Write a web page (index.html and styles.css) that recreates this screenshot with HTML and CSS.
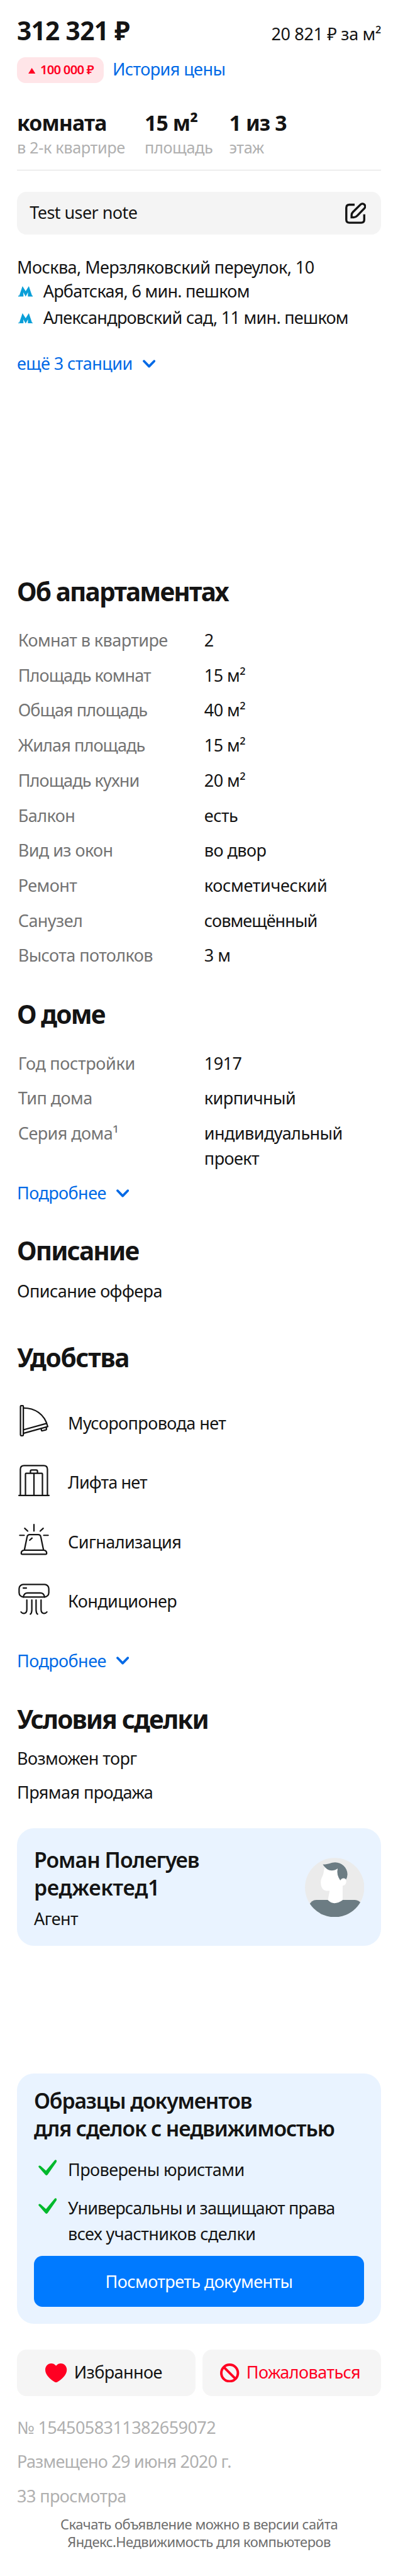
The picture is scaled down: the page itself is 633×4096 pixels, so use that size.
FILE: index.html
```html
<!DOCTYPE html>
<html lang="ru">
<head>
<meta charset="utf-8">
<title>Комната</title>
<link rel="stylesheet" href="styles.css">
</head>
<body>
<main class="offer">
  <header class="price-row">
    <div class="price">312 321 ₽</div>
    <div class="price-per">20 821 ₽ за м²</div>
  </header>
  <div class="history">
    <span class="badge"><svg class="badge-arrow" viewBox="0 0 20 16"><path d="M10 0 20 16H0z"/></svg><span class="badge-text">100 000 ₽</span></span>
    <a class="link history-link">История цены</a>
  </div>
  <div class="stats">
    <div><div class="stat-title">комната</div><div class="stat-sub">в 2-к квартире</div></div>
    <div><div class="stat-title">15 м²</div><div class="stat-sub">площадь</div></div>
    <div><div class="stat-title">1 из 3</div><div class="stat-sub">этаж</div></div>
  </div>
  <div class="note">
    <span class="note-text">Test user note</span>
    <svg class="note-icon" viewBox="45 38 180 181"><path d="M125 57H80Q54 57 54 83V184Q54 210 80 210H181Q207 210 207 184V138"/><path d="M99 165V146Q99 131 110 120L176 55A23 23 0 0 1 209 87L148 150Q134 165 118 165Z"/></svg>
  </div>
  <div class="address">Москва, Мерзляковский переулок, 10</div>
  <ul class="metro">
    <li><svg class="metro-icon" viewBox="0 0 14 9.800"><path d="M0 8.900H1L4 0 7 4.800 10 0 13 8.900H14V9.800H9.100V8.900L9.200 5.800 7 9.800 4.800 5.800 4.900 8.900V9.800H0Z"/></svg><span>Арбатская, 6 мин. пешком</span></li>
    <li><svg class="metro-icon" viewBox="0 0 14 9.800"><path d="M0 8.900H1L4 0 7 4.800 10 0 13 8.900H14V9.800H9.100V8.900L9.200 5.800 7 9.800 4.800 5.800 4.900 8.900V9.800H0Z"/></svg><span>Александровский сад, 11 мин. пешком</span></li>
  </ul>
  <a class="link more more-metro"><span>ещё 3 станции</span><svg class="chevron" viewBox="0 0 12 8"><path d="M1.200 1.300 6 6.300 10.800 1.300"/></svg></a>

  <h2 class="about-title">Об апартаментах</h2>
  <dl class="params">
    <dt>Комнат в квартире</dt><dd>2</dd>
    <dt class="tight">Площадь комнат</dt><dd>15 м²</dd>
    <dt class="tight">Общая площадь</dt><dd>40 м²</dd>
    <dt class="tight">Жилая площадь</dt><dd>15 м²</dd>
    <dt class="tight">Площадь кухни</dt><dd>20 м²</dd>
    <dt>Балкон</dt><dd>есть</dd>
    <dt>Вид из окон</dt><dd>во двор</dd>
    <dt>Ремонт</dt><dd class="loose">косметический</dd>
    <dt>Санузел</dt><dd class="tight">совмещённый</dd>
    <dt>Высота потолков</dt><dd>3 м</dd>
  </dl>

  <h2 class="house-title">О доме</h2>
  <dl class="params">
    <dt class="loose">Год постройки</dt><dd>1917</dd>
    <dt>Тип дома</dt><dd>кирпичный</dd>
    <dt>Серия дома¹</dt><dd>индивидуальный проект</dd>
  </dl>
  <a class="link more more-house"><span>Подробнее</span><svg class="chevron" viewBox="0 0 12 8"><path d="M1.200 1.300 6 6.300 10.800 1.300"/></svg></a>

  <h2 class="desc-title">Описание</h2>
  <p class="desc">Описание оффера</p>

  <h2 class="features-title">Удобства</h2>
  <ul class="features">
    <li><svg class="feature-icon" viewBox="0 0 32 32"><rect x="3.300" y="1.900" width="2.700" height="28.200" rx=".7"/><path d="M6 4C16.500 4 26 9.500 29 21.600L6 27.900M6 24.600 27.800 18.600M22.800 23.600 23.100 25Q23.300 25.700 24 25.500L27.200 24.700Q27.900 24.500 27.800 23.800L27.600 22.300"/></svg><span>Мусоропровода нет</span></li>
    <li><svg class="feature-icon" viewBox="0 0 32 32"><path d="M3.200 30V5.500Q3.200 2 6.700 2H25.200Q28.700 2 28.700 5.500V30M1.800 30.100H30.200M8 30V10Q8 9.300 8.700 9.300H23.300Q24 9.300 24 10V30M16 9.300V30M12.700 9.300V7.300Q12.700 6.100 13.900 6.100H18.100Q19.300 6.100 19.300 7.300V9.300"/></svg><span class="tight">Лифта нет</span></li>
    <li><svg class="feature-icon" viewBox="0 0 32 32"><path d="M16 1.900V8M7.300 5.400 10.100 8M24.700 5.400 21.900 8M2.600 12H6.800M25.200 12H29.400M7 25.800 9.500 13.600Q9.900 11.400 12 11.400H20Q22.100 11.400 22.500 13.600L25 25.800M12 16.600 14.200 14.600M6.500 26H25.500Q28 26.300 28 29.100 28 29.900 27.200 29.900H4.800Q4 29.900 4 29.100 4 26.300 6.500 26Z"/></svg><span>Сигнализация</span></li>
    <li><svg class="feature-icon" viewBox="0 0 32 32"><rect x="2" y="2" width="28" height="11.800" rx="4"/><path d="M5.900 5.400H8.900M6 13.800Q6.700 10 10 10H22Q25.300 10 26 13.800M9.300 16.700V25.500C9.300 30 5.500 30 3.800 27.900M14 16.700V26Q14 28.800 12.600 30M18 16.700V26Q18 28.800 19.400 30M22.700 16.700V25.500C22.700 30 26.500 30 28.200 27.900"/></svg><span>Кондиционер</span></li>
  </ul>
  <a class="link more more-features"><span>Подробнее</span><svg class="chevron" viewBox="0 0 12 8"><path d="M1.200 1.300 6 6.300 10.800 1.300"/></svg></a>

  <h2 class="deal-title">Условия сделки</h2>
  <ul class="deal"><li>Возможен торг</li><li>Прямая продажа</li></ul>

  <section class="card agent">
    <div>
      <div class="card-title">Роман Полегуев<br><span class="agent-nick">реджектед1</span></div>
      <div class="agent-role">Агент</div>
    </div>
    <svg class="avatar" viewBox="64 66 503 501">
      <clipPath id="round"><circle cx="315.500" cy="316.500" r="251"/></clipPath>
      <g clip-path="url(#round)">
        <path fill="#ebebeb" d="M64 66H567V567H64Z"/>
        <path fill="#6c7c83" d="M95 567V470Q120 421 160 421H487Q520 421 550 460V567Z"/>
        <path fill="#fff" d="M232 145Q224 165 221 196 218 214 207 231 198 248 198 272 199 345 257 345H273L258 423Q284 449 313 449 348 449 383 423V302Q414 294 414 264 413 245 400 239L345 150Z"/>
        <path fill="#6c7c83" d="M215 121C265 122 285 103 320 103 375 104 423 145 424 205Q423 230 412 249 406 238 391 238 375 238 363 256 329 208 341 155C300 184 252 180 215 121Z"/>
      </g>
    </svg>
  </section>

  <section class="card docs">
    <div class="card-title docs-title">Образцы документов<br>для сделок с недвижимостью</div>
    <ul class="checks">
      <li><svg class="check" viewBox="0 0 24 20"><path d="M.3 9.300Q0 7.900 1.100 7.500T3.400 8.200L9.800 14 20.800.8Q21.900-.4 23.100.3T23.500 2.600L12 19Q10.400 21 8.800 19Z"/></svg><span>Проверены юристами</span></li>
      <li><svg class="check" viewBox="0 0 24 20"><path d="M.3 9.300Q0 7.900 1.100 7.500T3.400 8.200L9.800 14 20.800.8Q21.900-.4 23.100.3T23.500 2.600L12 19Q10.400 21 8.800 19Z"/></svg><span><span class="tight">Универсальны и защищают права</span><br>всех участников сделки</span></li>
    </ul>
    <a class="docs-button">Посмотреть документы</a>
  </section>

  <div class="actions">
    <a class="action action-favorite"><svg class="heart" viewBox="0 0 61 54"><path d="M30.500 6.500C35 1.500 39 0 44 0 54 0 61 8 61 18 61 32 47 45 33.500 53Q30.500 55 27.500 53C14 45 0 32 0 18 0 8 7 0 17 0 22 0 26 1.500 30.500 6.500Z"/></svg><span>Избранное</span></a>
    <a class="action action-report"><svg class="ban" viewBox="0 0 54 54"><circle cx="27" cy="27" r="23.500"/><path d="M11 11 43 43"/></svg><span>Пожаловаться</span></a>
  </div>
  <ul class="meta"><li>№ 1545058311382659072</li><li class="meta-date">Размещено 29 июня 2020 г.</li><li>33 просмотра</li></ul>
  <p class="footer">Скачать объявление можно в версии сайта<br>Яндекс.Недвижимость для компьютеров</p>
</main>
</body>
</html>
```
FILE: styles.css
```css
/* 1rem equals ten layout units on a 375-unit wide screen */
html { font-size: 16.875px; }
body {
  margin: 0;
  background: #fff;
  color: #141414;
  font-family: "Noto Sans", "Open Sans", sans-serif;
  font-size: 1.6rem;
  line-height: 2.2rem;
  letter-spacing: -0.021em;
}
h2, p, ul, dl, dd { margin: 0; padding: 0; }
ul { list-style: none; }
svg { display: block; flex: none; }
.offer {
  box-sizing: border-box;
  height: 4096px;
  padding: 1.5rem 1.6rem 0;
  overflow: hidden;
  white-space: nowrap;
}
.link { color: #0069e6; }
.tight { letter-spacing: -0.033em; }
.loose { letter-spacing: -0.012em; }
h2 { font-size: 2.4rem; line-height: 2.8rem; font-weight: 700; letter-spacing: -0.045em; }

.price-row { display: flex; justify-content: space-between; align-items: baseline; height: 2.8rem; }
.price { font-size: 2.4rem; line-height: 2.8rem; font-weight: 700; letter-spacing: -0.015em; }
.price-per { letter-spacing: -0.013em; }
.history { display: flex; align-items: center; height: 2.4rem; margin-top: 1.1rem; gap: 0.8rem; }
.badge {
  box-sizing: border-box;
  display: flex;
  align-items: center;
  gap: 0.45rem;
  width: 8.2rem;
  height: 2.4rem;
  padding-left: 1.07rem;
  border-radius: 0.8rem;
  background: #ffe5e8;
  color: #ff0022;
  font-size: 1.2rem;
  font-weight: 600;
  letter-spacing: -0.038em;
}
.badge-text { margin-bottom: 0.08rem; }
.badge-arrow { width: 0.67rem; height: 0.53rem; margin-top: 0.12rem; fill: currentColor; }
.history-link { margin-bottom: 0.18rem; }
.stats {
  display: grid;
  grid-template-columns: 12.03rem 7.97rem auto;
  height: 5.63rem;
  margin-top: 2.56rem;
  border-bottom: 1px solid #dedede;
}
.stat-title { font-size: 2rem; line-height: 2.4rem; font-weight: 700; letter-spacing: -0.025em; }
.stat-sub { margin-top: 0.17rem; font-size: 1.5rem; line-height: 2rem; letter-spacing: -0.015em; color: #b0b0b0; }
.note {
  display: flex;
  align-items: center;
  justify-content: space-between;
  height: 4.08rem;
  margin-top: 2rem;
  padding: 0 1.4rem 0 1.2rem;
  border-radius: 0.9rem;
  background: #f4f4f4;
}
.note-text { margin-bottom: 0.15rem; }
.note-icon { width: 2rem; height: 2rem; fill: none; stroke: #141414; stroke-width: 18; }
.address { margin-top: 1.94rem; }
.metro { margin-top: 0.03rem; letter-spacing: -0.027em; }
.metro li { display: flex; align-items: center; gap: 0.97rem; height: 2.2rem; margin-bottom: 0.31rem; }
.metro-icon { width: 1.4rem; height: 0.98rem; margin: 0.16rem 0 0 0.1rem; fill: #0a9fd8; }
.more { display: flex; align-items: center; }
.chevron { width: 1.2rem; height: 0.8rem; margin: 0.08rem 0 0 0.97rem; fill: none; stroke: currentColor; stroke-width: 2.2; stroke-linecap: round; stroke-linejoin: round; }
.more-metro { margin-top: 2.14rem; }

.about-title { margin-top: 18.99rem; }
.params { display: grid; grid-template-columns: 17.55rem 12.5rem; row-gap: 0.9rem; margin-top: 2.01rem; padding-left: 0.1rem; line-height: 2.4rem; }
.params dt { color: #737373; }
.params dd { white-space: normal; }
.house-title { margin-top: 2.94rem; }
.more-house { margin-top: 0.92rem; }
.desc-title { margin-top: 2.96rem; }
.desc { margin-top: 1.24rem; }
.features-title { margin-top: 3.83rem; letter-spacing: -0.032em; }
.features { margin-top: 2.93rem; }
.features li { display: flex; height: 5.6rem; }
.features span { margin: 0.68rem 0 0 1.6rem; }
.feature-icon { width: 3.2rem; height: 3.2rem; fill: none; stroke: #141414; stroke-width: 1.33; stroke-linecap: round; stroke-linejoin: round; }
.more-features { margin-top: 0.68rem; }
.deal-title { margin-top: 3.02rem; }
.deal { margin-top: 1.2rem; }
.deal li { margin-bottom: 1rem; }

.card { box-sizing: border-box; border-radius: 1.6rem; background: #e9f3ff; }
.card-title { font-size: 2rem; line-height: 2.6rem; font-weight: 560; letter-spacing: -0.029em; }
.agent { display: flex; justify-content: space-between; height: 11.1rem; margin-top: 2.3rem; padding: 1.7rem 1.6rem 0; }
.agent-nick { letter-spacing: -0.009em; }
.agent-role { margin-top: 0.5rem; }
.avatar { width: 5.6rem; height: 5.6rem; margin-top: 1.07rem; }
.docs { height: 23.58rem; margin-top: 12rem; padding: 1.3rem 1.6rem 0; }
.docs-title { letter-spacing: -0.034em; }
.checks { margin-top: 1.33rem; line-height: 2.43rem; }
.checks li { display: flex; margin-bottom: 1.17rem; }
.check { width: 1.76rem; height: 1.5rem; margin: 0.3rem 1.04rem 0 0.4rem; fill: #00b92d; }
.docs-button {
  display: flex;
  align-items: center;
  justify-content: center;
  height: 4.8rem;
  margin-top: -0.26rem;
  border-radius: 0.8rem;
  background: #007aff;
  color: #fff;
}
.actions { display: grid; grid-template-columns: 1fr 1fr; gap: 0.7rem; height: 4.4rem; margin-top: 2.42rem; }
.action { box-sizing: border-box; display: flex; align-items: center; justify-content: center; gap: 0.66rem; border-radius: 0.9rem; background: #f5f5f5; }
.action span { margin-bottom: 0.1rem; }
.action-favorite { padding-right: 0.44rem; }
.action-report { padding-right: 0.3rem; color: #ff0022; }
.heart { width: 2.03rem; height: 1.8rem; fill: #ff0022; }
.ban { width: 1.8rem; height: 1.8rem; fill: none; stroke: currentColor; stroke-width: 7; }
.meta { margin-top: 1.85rem; color: #b0b0b0; }
.meta li { margin-bottom: 1.02rem; }
.meta-date { letter-spacing: -0.029em; }
.footer { margin-top: -0.24rem; color: #6e6e6e; font-size: 1.3rem; line-height: 1.67rem; letter-spacing: -0.023em; text-align: center; }
```
